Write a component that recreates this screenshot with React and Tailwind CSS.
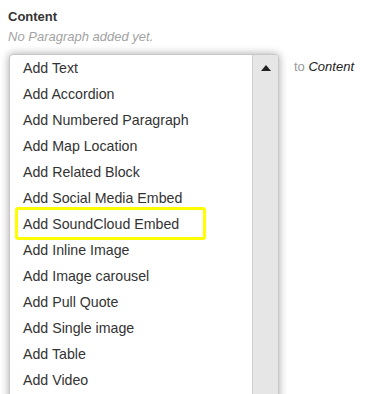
import React from 'react';

const items = [
  'Add Text',
  'Add Accordion',
  'Add Numbered Paragraph',
  'Add Map Location',
  'Add Related Block',
  'Add Social Media Embed',
  'Add SoundCloud Embed',
  'Add Inline Image',
  'Add Image carousel',
  'Add Pull Quote',
  'Add Single image',
  'Add Table',
  'Add Video',
];

export default function App() {
  return (
    <div className="w-[371px] h-[394px] overflow-hidden bg-white font-['Liberation_Sans',Arial,sans-serif]">
      <div className="pl-[8px] pt-[9px]">
        <div className="text-[13px] font-bold text-[#333] leading-[16px]">Content</div>
        <div className="text-[13px] italic text-[#a3a3a3] leading-[16px] mt-[4px]">No Paragraph added yet.</div>
      </div>
      <div className="flex items-start pl-[9px] mt-[9px]">
        <div className="w-[270px] h-[400px] flex rounded-t-[4px] border border-[#c8c8c8] bg-white shadow-[0_0_9px_rgba(0,0,0,0.35)] overflow-hidden">
          <ul className="flex-1">
            {items.map((t) => (
              <li key={t} className="relative h-[26px] leading-[26px] pl-[13px] text-[14.2px] text-[#333]">
                {t}
                {t === 'Add SoundCloud Embed' && (
                  <span className="absolute left-[5px] top-[-4px] w-[191px] h-[33px] border-[3px] border-[#ffff00] rounded-[3px]" />
                )}
              </li>
            ))}
          </ul>
          <div className="w-[26px] bg-[#e6e6e6] border-l border-[#cfcfcf] flex justify-center pt-[10px]">
            <svg width="10" height="6" viewBox="0 0 10 6">
              <path d="M0 6 L5 0 L10 6 Z" fill="#222" />
            </svg>
          </div>
        </div>
        <div className="ml-[15px] mt-[5px] text-[13px] leading-[16px]">
          <span className="text-[#999]">to </span>
          <span className="italic text-[#222]">Content</span>
        </div>
      </div>
    </div>
  );
}
